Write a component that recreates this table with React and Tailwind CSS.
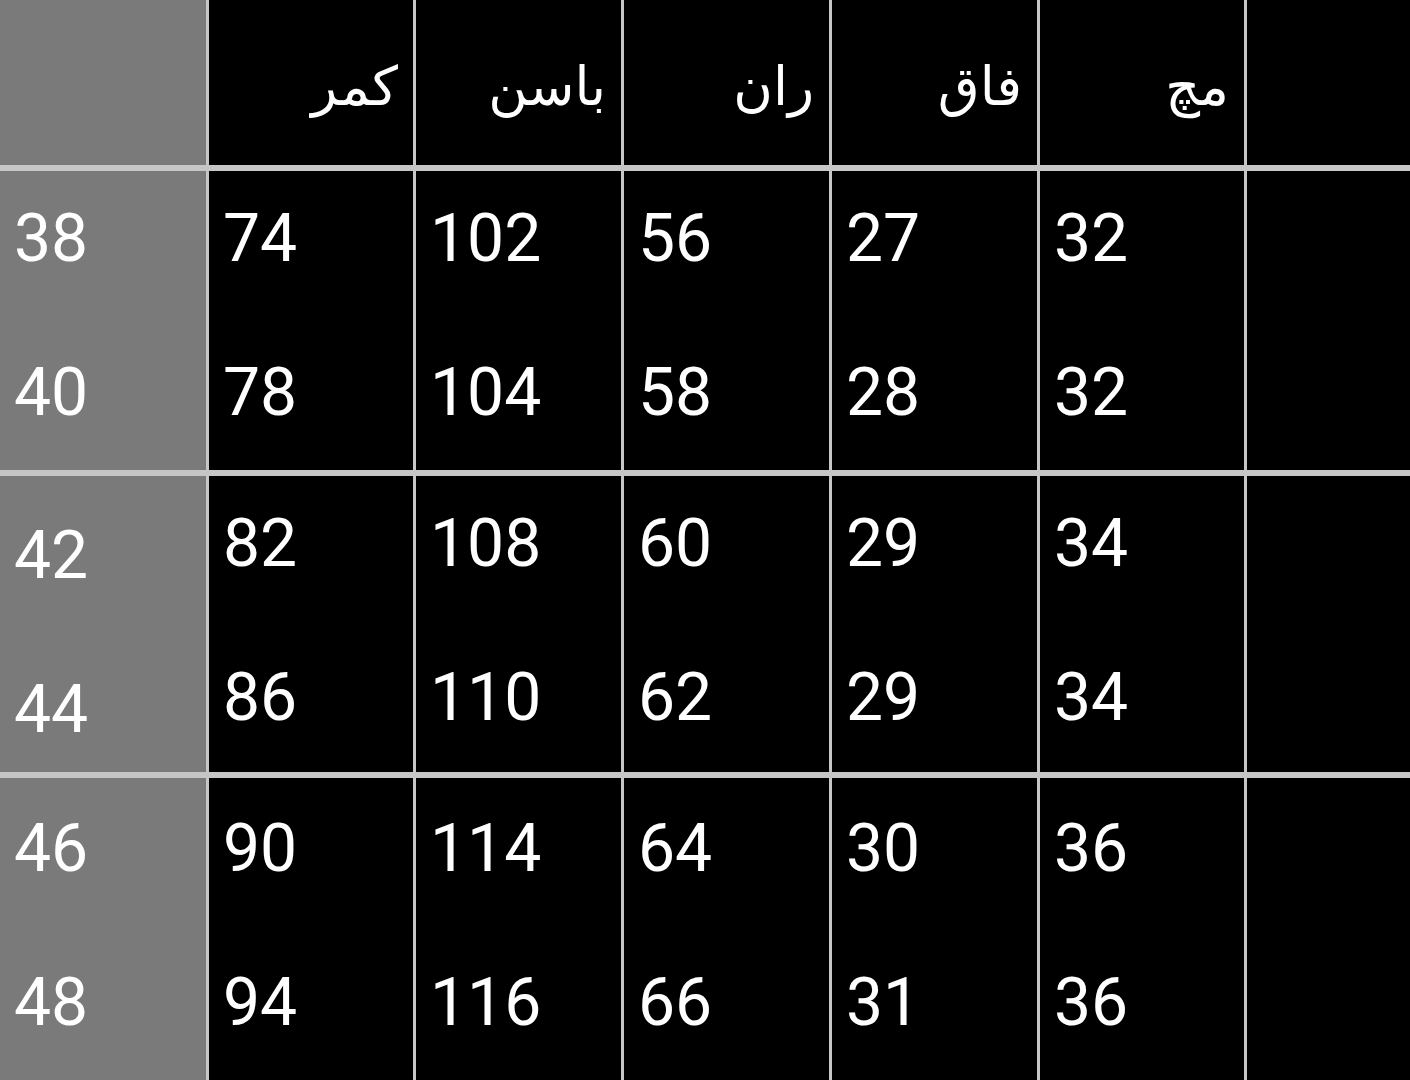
import React from "react";

const HEADERS = ["کمر", "باسن", "ران", "فاق", "مچ", ""];

// each group: two sizes and their measurements
const GROUPS = [
  { sizes: [38, 40], rows: [[74, 102, 56, 27, 32], [78, 104, 58, 28, 32]], pt: "pt-[34px]", sizePt: "pt-[34px]" },
  { sizes: [42, 44], rows: [[82, 108, 60, 29, 34], [86, 110, 62, 29, 34]], pt: "pt-[34px]", sizePt: "pt-[46px]" },
  { sizes: [46, 48], rows: [[90, 114, 64, 30, 36], [94, 116, 66, 31, 36]], pt: "pt-[37px]", sizePt: "pt-[37px]" },
];

function NumCell({ values, pt, gray }) {
  return (
    <div
      className={`flex flex-col gap-[86px] pl-[14px] ${pt} ${gray ? "bg-[#7a7a7a]" : "bg-black"}`}
    >
      {values.map((v, i) => (
        <div key={i} className="text-[66px] leading-[68px] text-white">
          {v}
        </div>
      ))}
    </div>
  );
}

export default function App() {
  return (
    <div
      className="w-[1410px] h-[1080px] overflow-hidden bg-[#c6c6c6] grid grid-cols-[206px_204px_205px_205px_205px_204px_163px] grid-rows-[165px_299px_296px_302px] gap-x-[3px] gap-y-[6px]"
      style={{ fontFamily: "Roboto, 'Noto Sans', sans-serif" }}
    >
      {/* header row */}
      <div className="bg-[#7a7a7a]" />
      {HEADERS.map((h, i) => (
        <div
          key={i}
          dir="rtl"
          className="bg-black flex items-center pr-[15px] pt-[8px] text-white text-[54px]"
          style={{ fontFamily: "'DejaVu Sans', sans-serif" }}
        >
          {h}
        </div>
      ))}

      {GROUPS.map((g, gi) => (
        <React.Fragment key={gi}>
          <NumCell values={g.sizes} pt={g.sizePt} gray />
          {[0, 1, 2, 3, 4].map((c) => (
            <NumCell key={c} values={g.rows.map((r) => r[c])} pt={g.pt} />
          ))}
          <div className="bg-black" />
        </React.Fragment>
      ))}
    </div>
  );
}
